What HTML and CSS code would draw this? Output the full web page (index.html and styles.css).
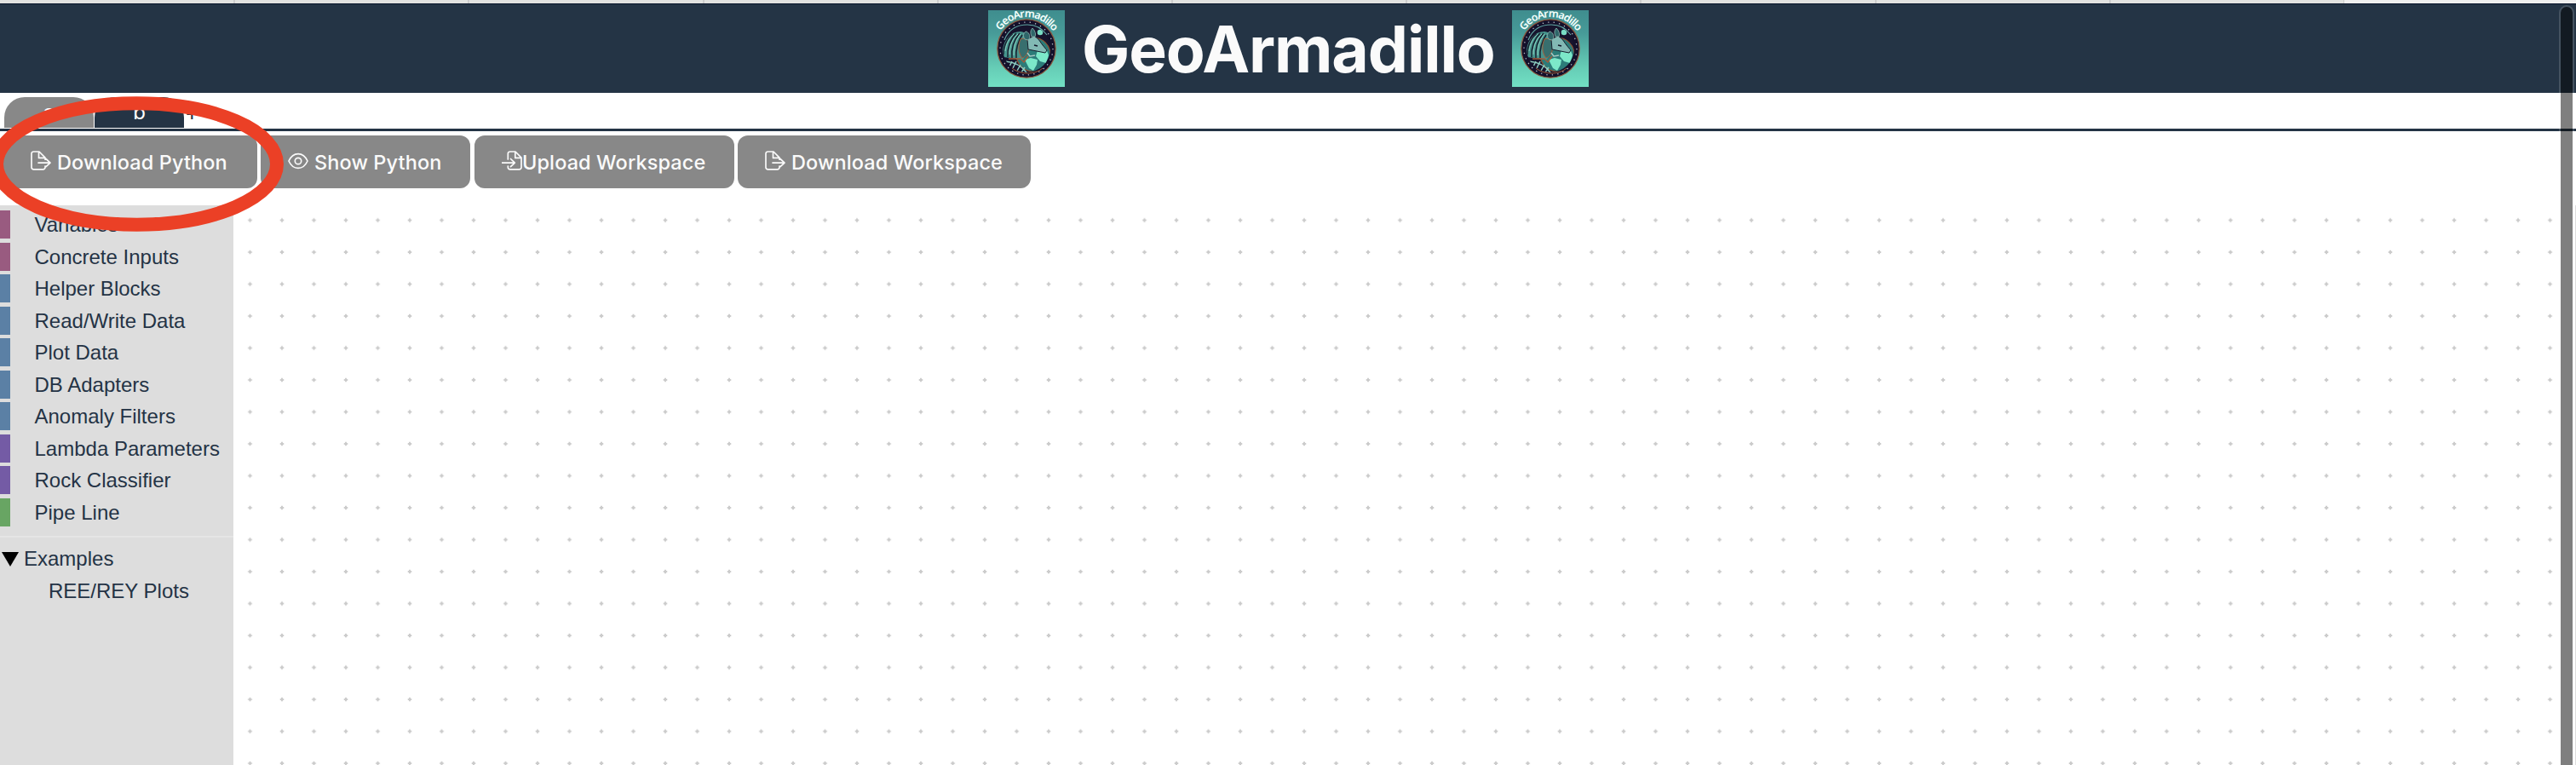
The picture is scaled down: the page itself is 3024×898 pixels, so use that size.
FILE: index.html
```html
<!DOCTYPE html>
<html lang="en">
<head>
<meta charset="utf-8">
<title>GeoArmadillo</title>
<link rel="stylesheet" href="styles.css">
</head>
<body>
<svg class="defs" aria-hidden="true">
  <defs>
    <linearGradient id="sky" x1="0" y1="0" x2="0" y2="1">
      <stop offset="0" stop-color="#3f8d8e"/><stop offset=".3" stop-color="#479b98"/>
      <stop offset=".75" stop-color="#66cdb6"/><stop offset="1" stop-color="#72e0c4"/>
    </linearGradient>
    <clipPath id="disc"><circle cx="45" cy="45" r="28"/></clipPath>
    <path id="arc" d="M14.500 24.300A37 37 0 0 1 76.500 25.500"/>
    <symbol id="logo" viewBox="0 0 90 90">
      <rect width="90" height="90" fill="url(#sky)"/>
      <circle cx="45" cy="45" r="34.2" fill="#14112b" stroke="#8d573c" stroke-width="1.2"/>
      <circle cx="45" cy="45" r="31" fill="none" stroke="#b9bfc9" stroke-width="1.3" stroke-dasharray="1.3 5.2"/>
      <g clip-path="url(#disc)">
        <circle cx="45" cy="45" r="28" fill="#17142d"/>
        <circle cx="53" cy="52" r="20" fill="#2c7c79" stroke="#93512f" stroke-width="1.2"/>
        <path d="M58 47l10-2 3 8-3 9-7-2-5-6zM43 58l7-2 8 2-1 6-4 7-5-3z" fill="#7ce8c9"/>
        <circle cx="61" cy="26" r="3.300" fill="#79dcc4"/>
        <path d="M17 55C15 38 25 25 38 25c9 1 11 8 9 18l-6 15-14-2z" fill="#47958d"/>
        <path d="M18 52c0-11 5-20 11-24M23 55c-1-10 3-21 10-28M28 56c-1-10 2-21 9-29M33 56c-1-9 2-20 7-27" fill="none" stroke="#18202f" stroke-width="1.500"/>
        <path d="M20 48c1-9 5-16 10-20M25 52c0-11 4-19 10-24M30 53c0-11 3-19 8-25" fill="none" stroke="#8bd0bf" stroke-width="1"/>
        <path d="M38 34c5-2 10 1 10 8 0 7-4 13-8 14-5-6-5-15-2-22z" fill="#386f6e" stroke="#a85d38"/>
        <path d="M46 34l8-4 5 4 5 7 5 6-2 3-10-2-10-2z" fill="#82b9b4" stroke="#17202e"/>
        <path d="M43 34c-3-4-1-9 2-9 4 2 5 7 2 10zM51 31c-2-5-1-8 1-10 4 4 4 8 3 10z" fill="#2e6669" stroke="#8fb6b0" stroke-width=".8"/>
        <path d="M54 41l4 1" stroke="#111528" stroke-width="1.600"/>
        <path d="M24 57h14l4 4 5-7" fill="none" stroke="#a45b3b" stroke-width="1.300"/>
        <path d="M46 50l3 4 6-1" fill="none" stroke="#a9c9c3" stroke-width="1.500"/>
        <path d="M20 60c11 1 21 6 26 15M29 68l4-8M34 71l4-7M39 73l4-6M25 66l3-6" fill="none" stroke="#8dcfc2" stroke-width="1.500"/>
      </g>
      <path d="M19 35C24 22 35 17 46 17c10 0 18 5 23 12" fill="none" stroke="#62aaa5" stroke-width="1.200"/>
      <path d="M28 68c10 8 27 8 36 0" fill="none" stroke="#a75f39"/>
      <text class="logo-text"><textPath href="#arc" textLength="73" lengthAdjust="spacing">GeoArmadillo</textPath></text>
    </symbol>
    <symbol id="export" viewBox="0 0 24 24">
      <path d="M17 18v1.500a2.400 2.400 0 0 1-2.400 2.400H3.400A2.400 2.400 0 0 1 1 19.500V3.400A2.400 2.400 0 0 1 3.400 1H10l7 7.200v2M9.500 1.200v7.200H17M9 14.100h14M18 9.500l5 4.600-5 4.600"/>
    </symbol>
    <symbol id="import" viewBox="0 0 24 24">
      <path d="M7.300 10V3.400A2.400 2.400 0 0 1 9.700 1H16l7 7.200v11.300a2.400 2.400 0 0 1-2.400 2.400H9.700a2.400 2.400 0 0 1-2.400-2.400V18M15.800 1.200v7.200H23M.5 14.100H15M10.500 9.500l4.800 4.600-4.800 4.600"/>
    </symbol>
    <symbol id="eye" viewBox="0 0 24 24">
      <path d="M1 12C3.500 6.500 7.500 3.600 12 3.600S20.500 6.500 23 12C20.500 17.500 16.500 20.400 12 20.400S3.500 17.500 1 12z"/><circle cx="12" cy="12" r="3.700"/>
    </symbol>
  </defs>
</svg>

<div class="browser-edge"></div>
<header class="banner">
  <svg class="logo"><use href="#logo"/></svg>
  <h1 class="title">GeoArmadillo</h1>
  <svg class="logo"><use href="#logo"/></svg>
</header>
<nav class="tabs">
  <div class="tab">a</div>
  <div class="tab active">b</div>
  <div class="add">+</div>
</nav>
<div class="toolbar">
  <button class="btn download-python"><svg class="icon"><use href="#export"/></svg><span>Download Python</span></button>
  <button class="btn show-python"><svg class="icon"><use href="#eye"/></svg><span>Show Python</span></button>
  <button class="btn upload-workspace"><svg class="icon"><use href="#import"/></svg><span>Upload Workspace</span></button>
  <button class="btn download-workspace"><svg class="icon"><use href="#export"/></svg><span>Download Workspace</span></button>
</div>
<main class="workspace">
  <aside class="toolbox">
    <div class="category plum">Variables</div>
    <div class="category plum">Concrete Inputs</div>
    <div class="category blue">Helper Blocks</div>
    <div class="category blue">Read/Write Data</div>
    <div class="category blue">Plot Data</div>
    <div class="category blue">DB Adapters</div>
    <div class="category blue">Anomaly Filters</div>
    <div class="category purple">Lambda Parameters</div>
    <div class="category purple">Rock Classifier</div>
    <div class="category green">Pipe Line</div>
    <div class="separator"></div>
    <div class="examples"><svg class="caret" viewBox="0 0 20 17"><path d="M0 0h20L10 17z"/></svg>Examples</div>
    <div class="example">REE/REY Plots</div>
  </aside>
  <svg class="canvas">
    <defs><pattern id="grid" x="0.75" y="-1.25" width="37.5" height="37.5" patternUnits="userSpaceOnUse"><path class="dot" d="M16.500 18.750h4.500M18.750 16.500v4.500"/></pattern></defs>
    <rect width="100%" height="100%" fill="url(#grid)"/>
  </svg>
</main>
<div class="scrollbar"></div>
<svg class="highlight"><ellipse cx="160.500" cy="192.500" rx="164.500" ry="71.200"/></svg>
</body>
</html>
```
FILE: styles.css
```css
* { box-sizing: border-box; }
body {
  margin: 0;
  height: 898px;
  display: flex;
  flex-direction: column;
  position: relative;
  overflow: hidden;
  background: #fff;
  color: #243345;
  font-family: Inter, "Liberation Sans", sans-serif;
}
.defs { position: absolute; width: 0; height: 0; }
.browser-edge {
  height: 4px;
  flex: none;
  background: linear-gradient(90deg, transparent 2752px, #efefef 2752px),
    repeating-linear-gradient(90deg, #e1e2e0 0 273.300px, #ccc 273.300px 275.200px) 1px 0;
}
.banner {
  height: 105px;
  flex: none;
  display: flex;
  justify-content: center;
  padding: 7px 0 0 1px;
  gap: 20px;
  background: #243445;
  border-top: 1px solid #07142a;
}
.logo { width: 90px; height: 90px; display: block; }
.logo-text { font: 600 12.500px "Noto Sans", sans-serif; fill: #f3fffc; }
.title {
  margin: 0;
  width: 485px;
  padding: 1px 4px 0 0;
  text-align: center;
  white-space: nowrap;
  font-size: 75px;
  line-height: 90px;
  font-weight: 700;
  letter-spacing: -1.100px;
  color: #fafafa;
}
.tabs {
  height: 45px;
  flex: none;
  display: flex;
  gap: 1px;
  padding: 5px 0 0 5px;
  border-bottom: 3px solid #243445;
}
.tab {
  width: 105px;
  height: 36px;
  border-radius: 24px 24px 0 0;
  background: #888;
  color: #fff;
  text-align: center;
  font-size: 24px;
  line-height: 35px;
}
.active { background: #243445; }
.add { font-size: 25px; line-height: 36px; }
.toolbar { height: 87px; flex: none; display: flex; gap: 4px; padding: 5px 0 0 4px; }
.btn {
  height: 62px;
  border: 0;
  border-radius: 12px;
  padding: 0 0 0 32px;
  display: flex;
  align-items: center;
  gap: 7px;
  background: #888;
  color: #fafafa;
  font: 500 23.500px/62px Inter, sans-serif;
  letter-spacing: .100px;
  white-space: nowrap;
}
.btn span { padding-top: 2px; }
.download-python { width: 298px; }
.show-python { width: 246px; }
.upload-workspace { width: 305px; margin-left: 1px; gap: 0; }
.download-workspace { width: 344px; }
.icon { width: 24px; height: 24px; flex: none; margin-bottom: 3px; fill: none; stroke: #fafafa; stroke-width: 1.700; stroke-linejoin: round; stroke-linecap: round; }
.workspace { flex: 1; display: grid; grid-template-columns: 274px 1fr; min-height: 0; border-right: 1px solid #ddd; }
.toolbox { background: #ddd; padding-top: 6px; font: 24px/34px "Liberation Sans", sans-serif; }
.category { height: 33px; margin-bottom: 4.500px; border-left: 12px solid; padding-left: 28.500px; }
.category::first-line { color: #243345; }
.plum { border-color: #995b80; }
.blue { border-color: #5b80a5; }
.purple { border-color: #745ba5; }
.green { border-color: #68a563; }
.separator { height: 2px; margin-top: 11.500px; background: #e5e5e5; }
.examples { display: flex; align-items: center; gap: 6px; padding-left: 2px; margin-top: 6.500px; height: 37px; }
.caret { width: 20px; height: 17px; fill: #000; }
.example { padding-left: 57px; line-height: 37px; }
.canvas { width: 100%; height: 100%; display: block; }
.dot { stroke: #ccc; stroke-width: 2; }
.scrollbar {
  position: absolute;
  left: 3004px;
  top: 6px;
  width: 18px;
  height: 910px;
  border: 2px solid rgba(255, 255, 255, .15);
  border-radius: 9px;
  background: rgba(0, 0, 0, .5);
  background-clip: padding-box;
}
.highlight { position: absolute; left: 0; top: 0; width: 360px; height: 290px; fill: none; stroke: #eb4026; stroke-width: 16; }
```
